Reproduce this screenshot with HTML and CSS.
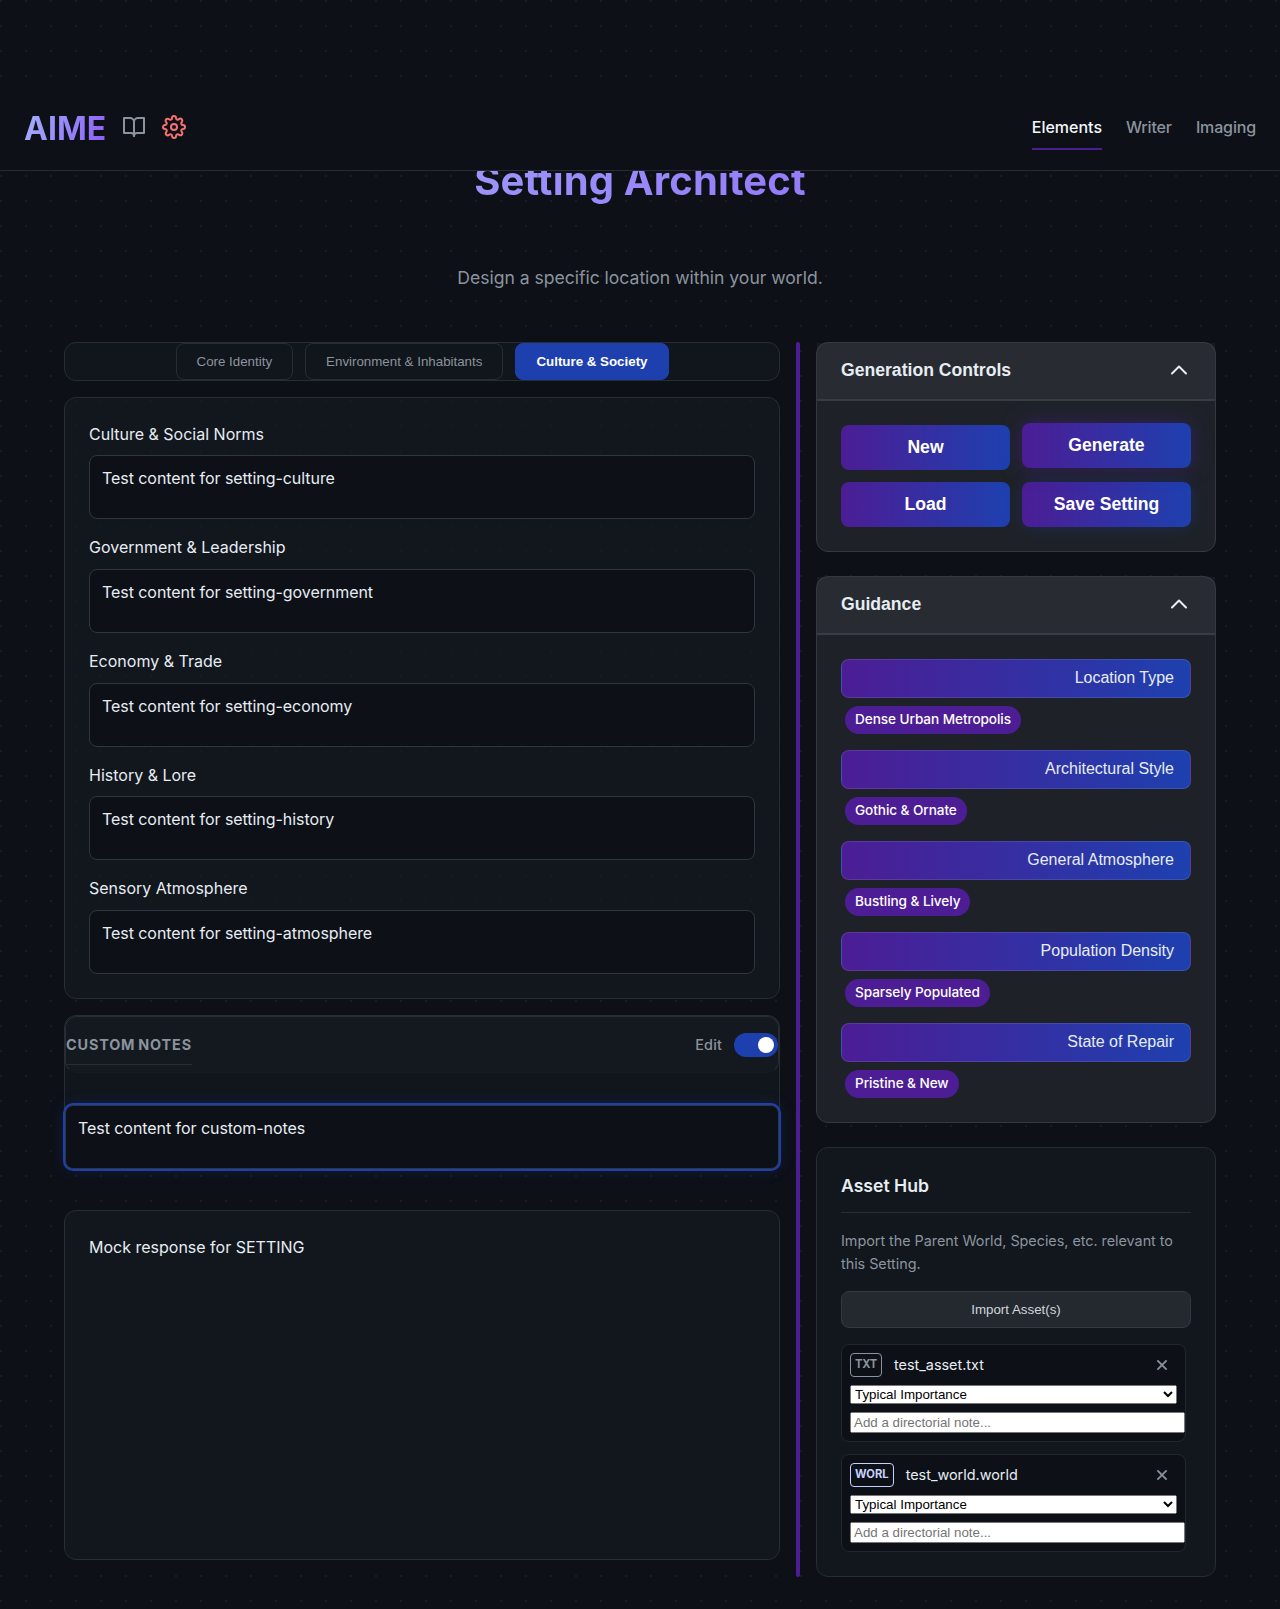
FILE: index.html
```html
<!DOCTYPE html>
<html lang="en">
<head>
<meta charset="utf-8">
<title>AIME - Setting Architect</title>
<link rel="stylesheet" href="styles.css">
</head>
<body>
<header class="site-header">
  <div class="brand">
    <span class="logo">AIME</span>
    <svg class="icon book" viewBox="0 0 24 24"><path d="M2 3h6a4 4 0 0 1 4 4v14a3 3 0 0 0-3-3H2z"/><path d="M22 3h-6a4 4 0 0 0-4 4v14a3 3 0 0 1 3-3h7z"/></svg>
    <svg class="icon gear" viewBox="0 0 24 24"><circle cx="12" cy="12" r="3"/><path d="M19.4 15a1.65 1.65 0 0 0 .33 1.82l.06.06a2 2 0 0 1 0 2.83 2 2 0 0 1-2.83 0l-.06-.06a1.65 1.65 0 0 0-1.82-.33 1.65 1.65 0 0 0-1 1.51V21a2 2 0 0 1-2 2 2 2 0 0 1-2-2v-.09A1.65 1.65 0 0 0 9 19.4a1.65 1.65 0 0 0-1.82.33l-.06.06a2 2 0 0 1-2.83 0 2 2 0 0 1 0-2.83l.06-.06a1.65 1.65 0 0 0 .33-1.82 1.65 1.65 0 0 0-1.51-1H3a2 2 0 0 1-2-2 2 2 0 0 1 2-2h.09A1.65 1.65 0 0 0 4.6 9a1.65 1.65 0 0 0-.33-1.82l-.06-.06a2 2 0 0 1 0-2.83 2 2 0 0 1 2.83 0l.06.06a1.65 1.65 0 0 0 1.82.33H9a1.65 1.65 0 0 0 1-1.51V3a2 2 0 0 1 2-2 2 2 0 0 1 2 2v.09a1.65 1.65 0 0 0 1 1.51 1.65 1.65 0 0 0 1.82-.33l.06-.06a2 2 0 0 1 2.83 0 2 2 0 0 1 0 2.83l-.06.06a1.65 1.65 0 0 0-.33 1.82V9a1.65 1.65 0 0 0 1.51 1H21a2 2 0 0 1 2 2 2 2 0 0 1-2 2h-.09a1.65 1.65 0 0 0-1.51 1z"/></svg>
  </div>
  <nav class="nav">
    <a class="nav-link active">Elements</a>
    <a class="nav-link">Writer</a>
    <a class="nav-link">Imaging</a>
  </nav>
</header>

<main class="page">
  <h1 class="title">Setting Architect</h1>
  <p class="subtitle">Design a specific location within your world.</p>

  <div class="workspace">
    <section class="column">
      <div class="tabs panel">
        <button class="tab">Core Identity</button>
        <button class="tab">Environment &amp; Inhabitants</button>
        <button class="tab selected">Culture &amp; Society</button>
      </div>
      <div class="fields panel">
        <div class="field"><label>Culture &amp; Social Norms</label><textarea class="text">Test content for setting-culture</textarea></div>
        <div class="field"><label>Government &amp; Leadership</label><textarea class="text">Test content for setting-government</textarea></div>
        <div class="field"><label>Economy &amp; Trade</label><textarea class="text">Test content for setting-economy</textarea></div>
        <div class="field"><label>History &amp; Lore</label><textarea class="text">Test content for setting-history</textarea></div>
        <div class="field"><label>Sensory Atmosphere</label><textarea class="text">Test content for setting-atmosphere</textarea></div>
      </div>
      <div class="notes panel">
        <div class="notes-head">
          <h3 class="notes-title">Custom Notes</h3>
          <div class="edit">Edit<span class="switch"><span class="knob"></span></span></div>
        </div>
        <textarea class="text focused">Test content for custom-notes</textarea>
      </div>
      <div class="response panel">Mock response for SETTING</div>
    </section>

    <div class="divider"></div>

    <aside class="sidebar">
      <section class="card">
        <div class="card-head"><span>Generation Controls</span><svg class="chevron" viewBox="0 0 24 24"><path d="M5 15.5l7-7 7 7"/></svg></div>
        <div class="card-body actions">
          <button class="action">New</button>
          <button class="action generate">Generate</button>
          <button class="action">Load</button>
          <button class="action save">Save Setting</button>
        </div>
      </section>

      <section class="card">
        <div class="card-head"><span>Guidance</span><svg class="chevron" viewBox="0 0 24 24"><path d="M5 15.5l7-7 7 7"/></svg></div>
        <div class="card-body guides">
          <div class="guide"><button class="bar">Location Type</button><span class="pill">Dense Urban Metropolis</span></div>
          <div class="guide"><button class="bar">Architectural Style</button><span class="pill">Gothic &amp; Ornate</span></div>
          <div class="guide"><button class="bar">General Atmosphere</button><span class="pill">Bustling &amp; Lively</span></div>
          <div class="guide"><button class="bar">Population Density</button><span class="pill">Sparsely Populated</span></div>
          <div class="guide"><button class="bar">State of Repair</button><span class="pill">Pristine &amp; New</span></div>
        </div>
      </section>

      <section class="hub panel">
        <h3 class="hub-title">Asset Hub</h3>
        <p class="hub-text">Import the Parent World, Species, etc. relevant to this Setting.</p>
        <button class="import">Import Asset(s)</button>
        <div class="assets">
          <div class="asset">
            <div class="asset-row"><span class="badge">TXT</span><span class="name">test_asset.txt</span><svg class="remove" viewBox="0 0 12 12"><path d="M1.4 1.4l9.2 9.2M10.6 1.4l-9.2 9.2"/></svg></div>
            <select class="importance"><option>Typical Importance</option></select>
            <input class="note" type="text" placeholder="Add a directorial note...">
          </div>
          <div class="asset">
            <div class="asset-row"><span class="badge world">WORL</span><span class="name">test_world.world</span><svg class="remove" viewBox="0 0 12 12"><path d="M1.4 1.4l9.2 9.2M10.6 1.4l-9.2 9.2"/></svg></div>
            <select class="importance"><option>Typical Importance</option></select>
            <input class="note" type="text" placeholder="Add a directorial note...">
          </div>
        </div>
      </section>
    </aside>
  </div>
</main>
</body>
</html>
```
FILE: styles.css
```css
* { box-sizing: border-box; }

html { background: #0d1017; }

body {
  margin: 0;
  padding-top: 85px;
  min-height: 1609px;
  color: #e6edf3;
  background-color: #0d1017;
  background-image: radial-gradient(circle at 1px 1px, #181c24 1px, transparent 0);
  background-size: 25px 25px;
  font: 16px/1.6 Inter, sans-serif;
}

h1, h3, p { margin: 0; }

button { font-family: "Liberation Sans", Arial, sans-serif; }

/* Header */
.site-header {
  position: relative;
  z-index: 1;
  display: flex;
  align-items: center;
  justify-content: space-between;
  height: 86px;
  padding: 0 24px;
  background: #0d1017;
  border-bottom: 1px solid #282c33;
}

.brand { display: flex; align-items: center; gap: 16px; }

.logo {
  padding-top: 2px;
  font-size: 32px;
  font-weight: 700;
  background: linear-gradient(110deg, #a5b4fc, #8b5cf6);
  background-clip: text;
  -webkit-background-clip: text;
  color: transparent;
}

.icon {
  width: 24px;
  height: 24px;
  margin-bottom: 1px;
  fill: none;
  stroke-width: 2;
  stroke-linecap: round;
  stroke-linejoin: round;
}

.book { stroke: #8b949e; }
.gear { stroke: #f87171; }

.nav { display: flex; gap: 24px; }

.nav-link {
  padding: 10px 0 8px;
  border-bottom: 2px solid transparent;
  color: #8b949e;
  font-weight: 500;
  letter-spacing: -.15px;
}

.nav-link.active { color: #f3f6fa; border-color: #4c1d95; letter-spacing: 0; }

/* Page heading */
.page { padding: 0 64px; }

.title {
  margin-top: -22px;
  font-size: 40px;
  line-height: 64px;
  font-weight: 700;
  letter-spacing: .15px;
  text-align: center;
  background: linear-gradient(135deg, #a5b4fc, #8b5cf6);
  background-clip: text;
  -webkit-background-clip: text;
  color: transparent;
}

.subtitle {
  margin: 51px 0 49.6px;
  font-size: 17.6px;
  line-height: 28.2px;
  letter-spacing: -.03px;
  text-align: center;
  color: #8b949e;
}

/* Columns */
.workspace {
  display: grid;
  grid-template-columns: 1fr 4px 400px;
  gap: 16px;
}

.divider { background: #4c1d95; border-radius: 2px; }

.panel {
  border: 1px solid #282c33;
  border-radius: 12px;
  background: rgba(22, 27, 34, .6);
}

.column { display: flex; flex-direction: column; gap: 16px; }

.tabs {
  display: flex;
  justify-content: center;
  gap: 12px;
  background: #11151c;
}

.tab {
  height: 37px;
  padding: 0 20px;
  border: 1px solid #282c33;
  border-radius: 8px;
  background: transparent;
  color: #8b949e;
  font-size: 13.333px;
}

.tab.selected {
  border-color: #1e40af;
  background: #1e40af;
  color: #fff;
  font-weight: 700;
}

.fields {
  display: flex;
  flex-direction: column;
  gap: 16px;
  padding: 24px;
}

.field { display: flex; flex-direction: column; gap: 8px; }

.text {
  display: block;
  width: 100%;
  height: 64px;
  padding: 12px;
  border: 1px solid #30363d;
  border-radius: 8px;
  outline: none;
  resize: none;
  overflow: hidden;
  background: #0d1017;
  color: #e6edf3;
  font: 16px Inter, sans-serif;
  letter-spacing: -.06px;
}

.notes {
  display: flex;
  flex-direction: column;
  gap: 32px;
  background: #11151c;
}

.notes-head {
  display: flex;
  align-items: flex-start;
  justify-content: space-between;
  height: 57px;
  padding-top: 16px;
  border: 1px solid #282c33;
  border-bottom-color: #171b21;
  border-radius: 12px;
  background: #14181f;
}

.notes-title {
  border-bottom: 1px solid #282c33;
  padding-bottom: 7px;
  color: #8b949e;
  font-size: 14.4px;
  line-height: 24px;
  font-weight: 700;
  letter-spacing: .85px;
  word-spacing: -1.3px;
  text-transform: uppercase;
}

.edit {
  display: flex;
  align-items: center;
  gap: 12px;
  height: 24px;
  color: #8b949e;
  font-size: 14.4px;
  font-weight: 500;
  letter-spacing: .15px;
}

.switch {
  display: flex;
  justify-content: flex-end;
  width: 44px;
  height: 24px;
  padding: 4px;
  border-radius: 12px;
  background: #1e40af;
}

.knob { width: 16px; height: 16px; border-radius: 50%; background: #fff; }

.focused { box-shadow: 0 0 0 2px #1e40af, 0 0 15px rgba(30, 64, 175, .3); }

.response {
  height: 350px;
  margin-top: 24px;
  padding: 24px;
  background: #12161d;
}

/* Sidebar */
.sidebar { display: flex; flex-direction: column; gap: 24px; }

.card {
  border: 1px solid #343941;
  border-radius: 12px;
  background: #1e2228;
}

.card-head {
  display: flex;
  align-items: center;
  justify-content: space-between;
  height: 57px;
  padding: 0 24px 2px;
  border-bottom: 1px solid #383d45;
  background: rgba(245, 245, 255, .05);
  font: 700 17.6px "Liberation Sans", Arial, sans-serif;
}

.card-head span { padding-top: 2px; }

.chevron {
  width: 24px;
  height: 24px;
  fill: none;
  stroke: #e6edf3;
  stroke-width: 2;
  stroke-linecap: round;
  stroke-linejoin: round;
}

.card-body { padding: 24px; border-top: 1px solid #383d45; }

.actions { display: grid; grid-template-columns: 1fr 1fr; gap: 12px; }

.action {
  height: 45px;
  padding: 0;
  border: 0;
  border-radius: 8px;
  background: linear-gradient(90deg, #4c1d95, #1e40af);
  color: #fff;
  font-size: 17.6px;
  font-weight: 700;
}

.generate { transform: translateY(-2px); box-shadow: 0 0 20px rgba(76, 29, 149, .5); }
.save { box-shadow: 0 0 15px rgba(30, 64, 175, .3); }

.guides { display: flex; flex-direction: column; gap: 16px; }

.guide { display: flex; flex-direction: column; align-items: flex-start; gap: 8px; }

.bar {
  width: 100%;
  height: 39px;
  padding: 0 16px 1px;
  border: 1px solid rgba(255, 255, 255, .11);
  border-radius: 8px;
  background: linear-gradient(90deg, #4c1d95, #1e40af);
  color: #e6edf3;
  font-size: 16px;
  text-align: right;
}

.pill {
  height: 28px;
  margin-left: 4px;
  padding: 0 10px;
  border-radius: 14px;
  background: #4c1d95;
  color: #fff;
  font-size: 13.6px;
  line-height: 27px;
  font-weight: 500;
  letter-spacing: -.07px;
}

.hub { padding: 24px; background: #12161d; }

.hub-title {
  padding-bottom: 12px;
  border-bottom: 1px solid #282c33;
  font-size: 17.6px;
  font-weight: 600;
}

.hub-text {
  margin: 16px 0;
  color: #8b949e;
  font-size: 14.4px;
  letter-spacing: -.035px;
}

.import {
  display: block;
  width: 100%;
  height: 37px;
  border: 1px solid #343941;
  border-radius: 8px;
  background: #24282f;
  color: #d0d6dd;
  font-size: 13.333px;
}

.assets {
  display: flex;
  flex-direction: column;
  gap: 12px;
  margin-top: 16px;
  padding-right: 5px;
}

.asset {
  display: flex;
  flex-direction: column;
  gap: 8px;
  height: 98px;
  padding: 8px;
  border: 1px solid #22262d;
  border-radius: 8px;
  background: #0d1017;
}

.asset-row { display: flex; align-items: center; gap: 12px; height: 24px; }

.badge {
  height: 24px;
  padding: 0 4px;
  border: 1px solid #8b949e;
  border-radius: 4px;
  color: #8b949e;
  font-size: 11.2px;
  line-height: 20px;
  font-weight: 700;
  letter-spacing: -.25px;
}

.badge.world { color: #c7d2fe; border-color: #c7d2fe; letter-spacing: 0; }

.name { flex: 1; padding-bottom: 1px; font-size: 14.4px; }

.remove {
  width: 12px;
  height: 12px;
  margin-right: 9px;
  fill: none;
  stroke: #8b949e;
  stroke-width: 1.8;
}

.importance, .note { font-family: "Liberation Sans", Arial, sans-serif; font-size: 13.333px; }

.importance { width: 100%; height: 19px; }

.note { box-sizing: content-box; width: 100%; }
```
